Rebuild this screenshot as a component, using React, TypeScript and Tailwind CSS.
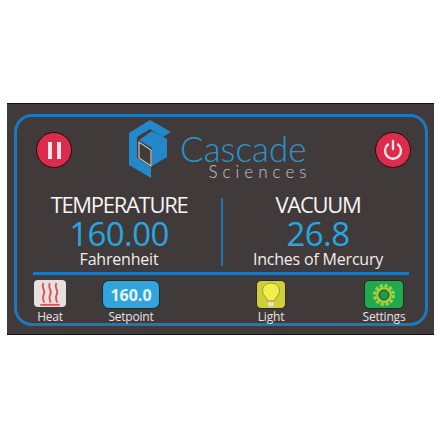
const font = { fontFamily: '"Open Sans", "Noto Sans", sans-serif' };
const logoFont = { fontFamily: "Lato, sans-serif", fontWeight: 300 };

function HexLogo() {
  return (
    <svg width="42" height="58" viewBox="0 0 42 58">
      <path d="M21 0 L42 12 L34 17 L21 9 L8 17 L8 38 L22 47 L22 58 L0 45 L0 13 Z" fill="#2288c9" />
      <path d="M23 11 L38 19 L38 37 L23 46 L23 28 L10 20 Z" fill="#2288c9" />
      <path d="M10 22 L10 38 L22 46 L22 30 Z" fill="none" stroke="#c9c5c4" strokeWidth="1.2" />
    </svg>
  );
}

function RoundButton({ children }: { children: React.ReactNode }) {
  return (
    <div className="flex h-9 w-9 items-center justify-center rounded-full border border-[#1a0b0e] bg-[#dc2c4b]">
      {children}
    </div>
  );
}

function Readout(props: { title: string; value: string; unit: string; className: string }) {
  return (
    <div className={"flex flex-col items-center " + props.className}>
      <div className="text-[22px] leading-[24px] tracking-[-1.3px] text-[#f6f4f4]">{props.title}</div>
      <div className="text-[33px] leading-[35px] tracking-[-0.6px] text-[#29a6e0]">{props.value}</div>
      <div className="text-[16px] leading-[16px] tracking-[-0.2px] text-[#f1eeee]">{props.unit}</div>
    </div>
  );
}

function ToolLabel({ children }: { children: React.ReactNode }) {
  return <div className="mt-[1px] text-[12px] leading-[14px] tracking-[-0.2px] text-[#e6e3e3]">{children}</div>;
}

export default function App() {
  return (
    <div className="h-[441px] w-[441px] bg-white pl-[7px] pt-[103px]" style={font}>
      <div className="h-[232px] w-[427px] border-y border-[#111] bg-[#403a3b] pl-[7px] pt-[10px]">
        <div className="h-[212px] w-[414px] rounded-[18px] border-[3px] border-[#1b78bd] px-[16px]">
          {/* header */}
          <div className="flex h-[75px] items-start">
            <div className="ml-[3px] mt-[15px]">
              <RoundButton>
                <div className="flex gap-[5px]">
                  <div className="h-[17px] w-[4px] bg-[#f6e3e6]" />
                  <div className="h-[17px] w-[4px] bg-[#f6e3e6]" />
                </div>
              </RoundButton>
            </div>
            <div className="ml-[57px] mt-[3px] flex items-start">
              <HexLogo />
              <div className="ml-[9px] flex flex-col items-end">
                <div className="mt-[12px] text-[35px] leading-[32px] text-[#2797cf]" style={logoFont}>
                  Cascade
                </div>
                <div className="-mr-[5px] text-[17px] leading-[16px] tracking-[5px] text-[#c9c6c6]" style={logoFont}>
                  Sciences
                </div>
              </div>
            </div>
            <div className="-mr-[2px] ml-auto mt-[15px]">
              <RoundButton>
                <svg width="24" height="24" viewBox="0 0 24 24" fill="none" stroke="#f6e3e6" strokeWidth="2.4" strokeLinecap="round">
                  <path d="M12 3 V11" />
                  <path d="M7 6.5 A8 8 0 1 0 17 6.5" />
                </svg>
              </RoundButton>
            </div>
          </div>

          {/* readouts */}
          <div className="flex h-[80px] items-stretch">
            <Readout title="TEMPERATURE" value="160.00" unit="Fahrenheit" className="w-[188px] pr-[16px]" />
            <div className="my-[6px] w-[2px] bg-[#1b78bd]" />
            <Readout title="VACUUM" value="26.8" unit="Inches of Mercury" className="flex-1 pl-[4px]" />
          </div>
          <div className="h-[3px] bg-[#1b78bd]" />

          {/* bottom tools */}
          <div className="flex items-start pt-[5px]">
            <div className="ml-[1px] flex w-[32px] flex-col items-center">
              <div className="mb-[2px] flex h-[27px] w-[32px] items-center justify-center rounded-[4px] bg-[#e6e0df]">
                <svg width="26" height="26" viewBox="0 0 24 24" fill="none" stroke="#e2505a" strokeWidth="1.7">
                  <path d="M6 2 C3 6 9 9 6 13 C4.5 15.5 6 17 6.5 20" />
                  <path d="M12 2 C9 6 15 9 12 13 C10.5 15.5 12 17 12.5 20" />
                  <path d="M18 2 C15 6 21 9 18 13 C16.5 15.5 18 17 18.5 20" />
                  <path d="M3 22 H21" />
                </svg>
              </div>
              <ToolLabel>Heat</ToolLabel>
            </div>
            <div className="ml-[36px] flex w-[58px] flex-col items-center">
              <div className="flex h-[29px] w-[58px] items-center justify-center rounded-[7px] border border-[#182a36] bg-[#2fa5dc] text-[16px] font-bold text-[#e6f4fb]">
                160.0
              </div>
              <ToolLabel>Setpoint</ToolLabel>
            </div>
            <div className="ml-[96px] flex w-[30px] flex-col items-center">
              <div className="flex h-[29px] w-[30px] items-center justify-center rounded-[5px] border border-[#2e2e14] bg-[#cfcf3c]">
                <svg width="20" height="25" viewBox="0 0 20 25">
                  <path d="M10 1 C4.5 1 1.5 5 1.5 9 C1.5 13 5.5 15 6.5 19 H13.5 C14.5 15 18.5 13 18.5 9 C18.5 5 15.5 1 10 1 Z" fill="#f4ee4a" stroke="#8a8a2c" strokeWidth="0.8" />
                  <path d="M7 20 H13 V23 L11.5 24.5 H8.5 L7 23 Z" fill="#e4e2c0" />
                </svg>
              </div>
              <ToolLabel>Light</ToolLabel>
            </div>
            <div className="ml-[78px] flex w-[40px] flex-col items-center">
              <div className="flex h-[29px] w-[40px] items-center justify-center rounded-[5px] border border-[#12331c] bg-[#21a94f]">
                <svg width="24" height="24" viewBox="0 0 24 24">
                  <circle cx="12" cy="12" r="9.5" fill="none" stroke="#a6cf3e" strokeWidth="3" strokeDasharray="3.2 1.8" />
                  <circle cx="12" cy="12" r="8" fill="#a6cf3e" />
                  <circle cx="12" cy="12" r="5" fill="#1d9a4a" stroke="#1b3d24" strokeWidth="1" />
                </svg>
              </div>
              <ToolLabel>Settings</ToolLabel>
            </div>
          </div>
        </div>
      </div>
    </div>
  );
}
